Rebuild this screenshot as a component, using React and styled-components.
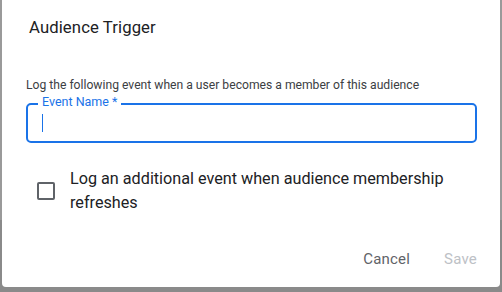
import React from "react";
import styled, { createGlobalStyle } from "styled-components";

const GlobalStyle = createGlobalStyle`
  html, body {
    margin: 0;
    padding: 0;
    background: #8f8f8f;
    font-family: Roboto, "Liberation Sans", Arial, sans-serif;
  }
`;

const Backdrop = styled.div`
  width: 502px;
  height: 292px;
  padding-left: 2px;
  box-sizing: border-box;
  background: linear-gradient(to bottom, #9a9a9a 0, #9a9a9a 220px, #8a8a8a 220px);
`;

const Dialog = styled.div`
  width: 498px;
  height: 287px;
  background: #fff;
  border-radius: 0 0 4px 4px;
  box-sizing: border-box;
  padding: 18px 24px 0 24px;
  display: flex;
  flex-direction: column;
`;

const Title = styled.h2`
  margin: 0 0 0 3px;
  font-size: 16.7px;
  font-weight: 400;
  color: #202124;
  line-height: 20px;
  letter-spacing: 0.1px;
`;

const Description = styled.p`
  margin: 39px 0 0 0;
  font-size: 12.15px;
  color: #3c4043;
  line-height: 16px;
`;

const Field = styled.div`
  position: relative;
  margin-top: 10px;
  height: 40px;
  border: 2px solid #1a73e8;
  border-radius: 5px;
  box-sizing: border-box;
  width: 451px;
  display: flex;
  align-items: center;
  padding-left: 14px;
`;

const FloatingLabel = styled.span`
  position: absolute;
  top: -10px;
  left: 10px;
  padding: 0 4px;
  background: #fff;
  font-size: 12.5px;
  line-height: 14px;
  color: #1a73e8;
`;

const Caret = styled.span`
  width: 1px;
  height: 18px;
  background: #1a73e8;
`;

const CheckRow = styled.label`
  display: flex;
  align-items: center;
  margin-top: 24px;
  padding-left: 11px;
  gap: 15px;
`;

const Box = styled.span`
  flex: none;
  width: 18px;
  height: 18px;
  border: 2px solid #5f6368;
  border-radius: 2px;
  box-sizing: border-box;
`;

const CheckText = styled.span`
  font-size: 16.2px;
  line-height: 24px;
  color: #202124;
  width: 390px;
`;

const Actions = styled.div`
  margin-top: auto;
  margin-bottom: 16px;
  display: flex;
  justify-content: flex-end;
  gap: 18px;
  margin-right: -9px;
`;

const TextButton = styled.button`
  background: none;
  border: none;
  padding: 0 8px;
  height: 24px;
  font-family: inherit;
  font-size: 15px;
  letter-spacing: 0.2px;
  color: ${({ disabled }) => (disabled ? "#bdc1c6" : "#5f6368")};
`;

export default function App() {
  return (
    <>
      <GlobalStyle />
      <Backdrop>
        <Dialog>
          <Title>Audience Trigger</Title>
          <Description>
            Log the following event when a user becomes a member of this audience
          </Description>
          <Field>
            <FloatingLabel>Event Name *</FloatingLabel>
            <Caret />
          </Field>
          <CheckRow>
            <Box />
            <CheckText>
              Log an additional event when audience membership refreshes
            </CheckText>
          </CheckRow>
          <Actions>
            <TextButton>Cancel</TextButton>
            <TextButton disabled>Save</TextButton>
          </Actions>
        </Dialog>
      </Backdrop>
    </>
  );
}
